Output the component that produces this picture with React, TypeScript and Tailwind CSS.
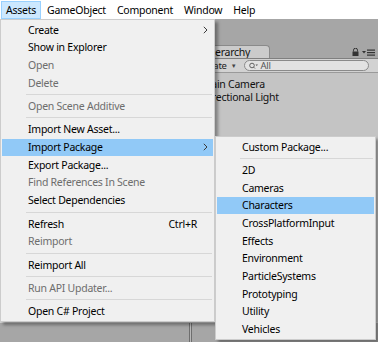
import React from "react";

type It = { label?: string; disabled?: boolean; active?: boolean; shortcut?: string; arrow?: boolean; sep?: boolean };

const mainItems: It[] = [
  { label: "Create", arrow: true },
  { label: "Show in Explorer" },
  { label: "Open", disabled: true },
  { label: "Delete", disabled: true },
  { sep: true },
  { label: "Open Scene Additive", disabled: true },
  { sep: true },
  { label: "Import New Asset..." },
  { label: "Import Package", active: true, arrow: true },
  { label: "Export Package..." },
  { label: "Find References In Scene", disabled: true },
  { label: "Select Dependencies" },
  { sep: true },
  { label: "Refresh", shortcut: "Ctrl+R" },
  { label: "Reimport", disabled: true },
  { sep: true },
  { label: "Reimport All" },
  { sep: true },
  { label: "Run API Updater...", disabled: true },
  { sep: true },
  { label: "Open C# Project" },
];

const subItems: It[] = [
  { label: "Custom Package..." },
  { sep: true },
  { label: "2D" },
  { label: "Cameras" },
  { label: "Characters", active: true },
  { label: "CrossPlatformInput" },
  { label: "Effects" },
  { label: "Environment" },
  { label: "ParticleSystems" },
  { label: "Prototyping" },
  { label: "Utility" },
  { label: "Vehicles" },
];

function Chevron() {
  return (
    <svg width="5" height="8" viewBox="0 0 5 8" className="shrink-0">
      <path d="M0.8 0.8 L4 4 L0.8 7.2" fill="none" stroke="#3a3a3a" strokeWidth="1" />
    </svg>
  );
}

function Row({ it, pl, sepMl }: { it: It; pl: string; sepMl: string }) {
  if (it.sep) {
    return (
      <div className="h-[5.7px] flex items-center">
        <div className={`h-px flex-1 bg-[#d7d7d7] ${sepMl} mr-[1px]`} />
      </div>
    );
  }
  return (
    <div
      className={`h-[17.7px] flex items-center ${pl} pr-[5px] ${it.active ? "bg-[#91c9f7]" : ""} ${
        it.disabled ? "text-[#6d6d6d]" : "text-[#000000]"
      }`}
    >
      <span className="flex-1 whitespace-nowrap">{it.label}</span>
      {it.shortcut && <span className="mr-[11px] whitespace-nowrap">{it.shortcut}</span>}
      {it.arrow && <Chevron />}
    </div>
  );
}

export default function App() {
  return (
    <div className="relative w-[378px] h-[342px] overflow-hidden font-['Noto_Sans',sans-serif] text-[10.5px] tracking-[-0.25px] leading-none bg-[#a6a6a6]">
      {/* menu bar */}
      <div className="h-[19px] bg-white flex items-stretch pl-[1px] pt-[1px] gap-[1px] text-black">
        <div className="px-[4px] flex items-center bg-[#cce8ff] border border-[#99d1ff]">Assets</div>
        <div className="px-[5px] flex items-center">GameObject</div>
        <div className="px-[5px] flex items-center">Component</div>
        <div className="px-[5px] flex items-center">Window</div>
        <div className="px-[5px] flex items-center">Help</div>
      </div>

      {/* editor body */}
      <div className="flex flex-col h-[323px]">
        <div className="flex h-[303px]">
          <div className="w-[190px] bg-[#a6a6a6] border-r border-[#6e6e6e]" />
          <div className="w-[2px] bg-[#b8b8b8] border-r border-[#6e6e6e]" />
          <div className="flex-1 flex flex-col">
            <div className="h-[26px] bg-[#a6a6a6]" />
            {/* tab row */}
            <div className="h-[13px] flex items-end bg-[#a6a6a6]">
              <div className="ml-[4px] w-[74px] h-[13px] bg-[#cbcbcb] border border-b-0 border-[#8a8a8a] rounded-tr-[4px] rounded-tl-[2px] flex items-center pl-[8px] text-[#111]">
                Hierarchy
              </div>
              <div className="flex-1" />
              <div className="flex items-center gap-[3px] mr-[3px] mb-[2px]">
                <svg width="7" height="8" viewBox="0 0 7 8">
                  <path d="M1.5 3.5 V2.2 A2 2 0 0 1 5.5 2.2 V3.5" fill="none" stroke="#333" strokeWidth="1" />
                  <rect x="0.5" y="3.5" width="6" height="4.5" fill="#333" />
                </svg>
                <svg width="13" height="7" viewBox="0 0 13 7">
                  <path d="M0 2 L4 2 L2 4.5 Z" fill="#333" />
                  <rect x="5" y="0.5" width="8" height="1.2" fill="#333" />
                  <rect x="5" y="3" width="8" height="1.2" fill="#333" />
                  <rect x="5" y="5.5" width="8" height="1.2" fill="#333" />
                </svg>
              </div>
            </div>
            {/* toolbar */}
            <div className="h-[15px] bg-[#d2d2d2] border-t border-[#7f7f7f] border-b border-b-[#9a9a9a] flex items-center pl-[7px] pr-[9px] text-[9.5px] text-[#222]">
              <span className="whitespace-nowrap">Create</span>
              <span className="ml-[4px] text-[6px] text-[#444]">▼</span>
              <div className="ml-[8px] flex-1 h-[11px] rounded-full border border-[#8a8a8a] bg-[#e2e2e2] flex items-center pl-[4px] text-[#555]">
                <svg width="10" height="8" viewBox="0 0 10 8">
                  <circle cx="3" cy="3.5" r="2.3" fill="none" stroke="#555" strokeWidth="0.9" />
                  <path d="M4.7 5.2 L6 6.5" stroke="#555" strokeWidth="0.9" />
                  <path d="M6.5 2.5 L9 2.5 L7.75 4 Z" fill="#555" />
                </svg>
                <span className="ml-[1px]">All</span>
              </div>
            </div>
            {/* content */}
            <div className="flex-1 bg-[#c4c4c4] pl-[10px] pt-[5px] text-[#111] text-[10.5px]">
              <div className="h-[13px] flex items-center whitespace-nowrap">Main Camera</div>
              <div className="h-[13px] flex items-center whitespace-nowrap">Directional Light</div>
            </div>
          </div>
        </div>
        <div className="flex-1 flex border-t border-[#d0d0d0] bg-[#a6a6a6]">
          <div className="w-[190px] border-r border-[#6e6e6e]" />
          <div className="w-[2px] bg-[#b8b8b8] border-r border-[#6e6e6e]" />
          <div className="flex-1" />
        </div>
      </div>

      {/* Assets menu */}
      <div className="absolute left-0 top-[19px] w-[215px] bg-[#f0f0f0] border border-[#cccccc] p-[1px] shadow-[3px_3px_3px_rgba(0,0,0,0.35)]">
        {mainItems.map((it, i) => (
          <Row key={i} it={it} pl="pl-[26px]" sepMl="ml-[24px]" />
        ))}
      </div>

      {/* Import Package submenu */}
      <div className="absolute left-[215px] top-[136px] w-[161px] bg-[#f0f0f0] border border-[#cccccc] p-[1px] shadow-[3px_3px_3px_rgba(0,0,0,0.35)]">
        {subItems.map((it, i) => (
          <Row key={i} it={it} pl="pl-[25px]" sepMl="ml-[23px]" />
        ))}
      </div>
    </div>
  );
}
